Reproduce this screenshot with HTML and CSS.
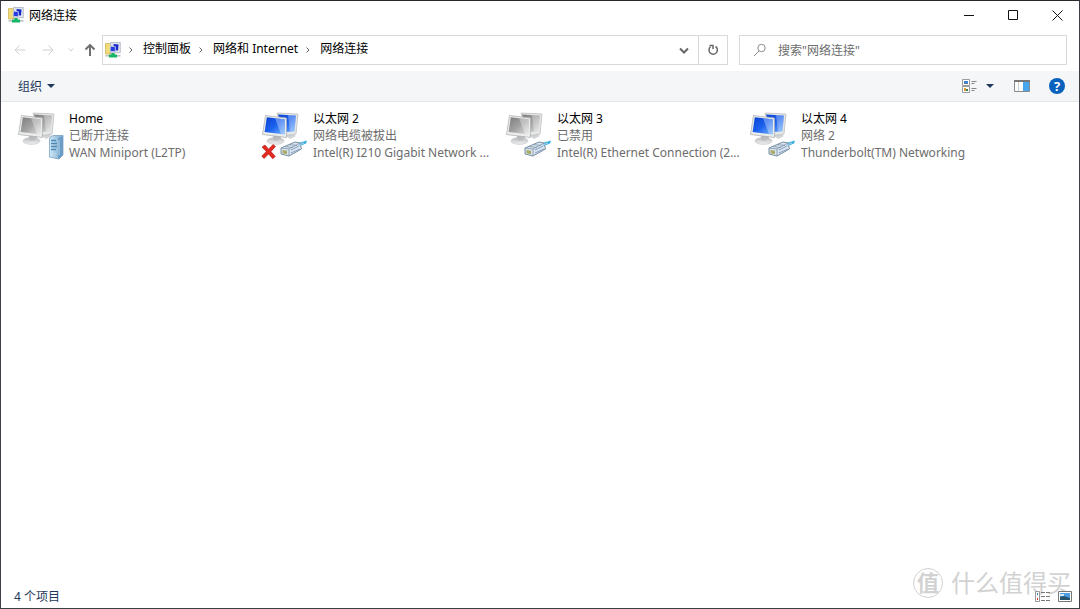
FILE: index.html
```html
<!DOCTYPE html>
<html lang="zh-CN">
<head>
<meta charset="utf-8">
<title>网络连接</title>
<link rel="stylesheet" href="styles.css">
</head>
<body>
<svg class="defs" aria-hidden="true">
  <defs>
    <linearGradient id="blue" x1="0" y1="0" x2="1" y2="1"><stop offset="0" stop-color="#0a3fd0"/><stop offset=".5" stop-color="#1b62ee"/><stop offset="1" stop-color="#7db8fb"/></linearGradient>
    <linearGradient id="gray" x1="0" y1="0" x2="1" y2="1"><stop offset="0" stop-color="#7c7c7c"/><stop offset=".5" stop-color="#a2a2a2"/><stop offset="1" stop-color="#e2e2e2"/></linearGradient>
    <linearGradient id="base" x1="0" y1="0" x2="0" y2="1"><stop offset="0" stop-color="#b9bbbe"/><stop offset="1" stop-color="#f1f1f1"/></linearGradient>
    <linearGradient id="tower" x1="0" y1="0" x2="1" y2="0"><stop offset="0" stop-color="#d4e9f7"/><stop offset="1" stop-color="#6fa3cb"/></linearGradient>
  </defs>
  <symbol id="monitors" viewBox="0 0 48 50">
    <path d="M25 26l7-2 3 2-6 3z" fill="#d2d4d6"/>
    <path d="M16 3L37 4 35 24 23 26z" fill="#e6e7e8" stroke="#b4b6b8" stroke-width=".7"/>
    <path d="M17 4.500L35 5.500 33.500 21.500 23 22z" fill="var(--screen)"/>
    <path d="M27 5l8 .5-1.500 16-4.500.3z" fill="#fff" opacity=".3"/>
    <path d="M12 25l8 1-1 5h-6z" fill="#a9abad"/>
    <ellipse cx="14.500" cy="31" rx="8.500" ry="3.400" fill="url(#base)" stroke="#c4c5c6" stroke-width=".6"/>
    <path d="M12 26l6 1-.5 3.500-5-.2z" fill="#babcbe"/>
    <path d="M4.500 5.500L25.500 8 25.500 27.500 1.500 24.500z" fill="#eceded" stroke="#a8aaac" stroke-width=".7"/>
    <path d="M5.800 7.200L24 9.300 24 24.500 3.600 22z" fill="var(--screen)"/>
    <path d="M14 8.200l10 1.100v15.200l-4-.5z" fill="#fff" opacity=".32"/>
  </symbol>
  <symbol id="plug" viewBox="0 0 48 50">
    <path d="M33 35l6-2.500 7-2-1 3-6 2.500z" fill="#35aedb"/>
    <path d="M20 38l14-6 5 1 1.500 6L28 46l-8-2z" fill="#d9e5ef" stroke="#6c8298" stroke-width=".9"/>
    <path d="M20 38l8 1 11-6M28 39v7M24 36.500l8 1M28 34.500l8 1" fill="none" stroke="#7e93ab" stroke-width=".8"/>
    <path d="M30 40l8-4M30 43l9-4" stroke="#86a0c4" stroke-width="1"/>
    <path d="M21.500 40l4.500.8v3.400l-4.500-1z" fill="#a9aa65"/>
    <path d="M38 35l5-2" stroke="#8cc8e5" stroke-width="1.500"/>
  </symbol>
  <symbol id="server" viewBox="0 0 48 50">
    <path d="M32.500 28L36 25.500h10V45l-4 4-9.500-2z" fill="url(#tower)" stroke="#6a97bb" stroke-width=".7"/>
    <path d="M41 28.500V49l5-4V26z" fill="#6b9cc5"/>
    <path d="M34 30.500h5M34 33.500h6M34 36.500h6M34 39.500h5" stroke="#4d87b5" stroke-width="1.300"/>
    <path d="M34 43l5 1M42 30v15" stroke="#b8d9ef"/>
  </symbol>
  <symbol id="cross" viewBox="0 0 48 50">
    <path d="M1 37l3-2 3.600 4.300L12 34.500l2.500 2-4.500 5 4.300 5-2.600 2.200-4.200-4.700-4.400 4.500L.8 46.200l4.500-4.800z" fill="#e02a22" stroke="#b31512" stroke-width=".6"/>
  </symbol>
  <symbol id="app" viewBox="0 0 16 16">
    <path d="M.5 1.500h4l1 1.500v9h-5z" fill="#f0dc79" stroke="#c4a53c" stroke-width=".6"/>
    <path d="M5.500.5h9.800v10.300H5.500z" fill="#dfe4ec" stroke="#a2abba" stroke-width=".7"/>
    <path d="M8.500 2l5 .6-.5 6-4-.4z" fill="#1628cc"/>
    <path d="M5.500 4l5 .8-.3 5L5 9.200z" fill="#253cde" stroke="#d4d9e8" stroke-width=".8"/>
    <path d="M6 11h4v2H6z" fill="#c8ccd0"/>
    <path d="M.5 13.800h15" stroke="#b5babd" stroke-width="1.500"/>
    <path d="M6.500 11h3v1.500h2.500v3H4v-3h2.500z" fill="#16b568"/>
  </symbol>
</svg>
<div class="window">
  <header class="titlebar">
    <svg class="app-icon"><use href="#app"/></svg>
    <h1 class="title">网络连接</h1>
    <div class="controls">
      <button class="control" aria-label="最小化"><svg viewBox="0 0 11 11"><path d="M0 5.500h10"/></svg></button>
      <button class="control" aria-label="最大化"><svg viewBox="0 0 11 11"><path d="M.5 .5h9v9h-9z"/></svg></button>
      <button class="control" aria-label="关闭"><svg viewBox="0 0 11 11"><path d="M.5.5l10 10M10.500.5l-10 10"/></svg></button>
    </div>
  </header>
  <nav class="navbar">
    <div class="history">
      <button class="nav-button" aria-label="后退" disabled><svg viewBox="0 0 12 12"><path d="M11.500 6H1M5.500 1.500L1 6l4.500 4.500"/></svg></button>
      <button class="nav-button" aria-label="前进" disabled><svg viewBox="0 0 12 12"><path d="M.5 6H11M6.500 1.500L11 6l-4.500 4.500"/></svg></button>
      <button class="nav-button recent" aria-label="最近位置" disabled><svg viewBox="0 0 12 12"><path d="M3.500 4.500L6 7l2.500-2.500"/></svg></button>
      <button class="nav-button up" aria-label="向上"><svg viewBox="0 0 12 12"><path d="M6 12V1M1.500 5.500L6 1l4.500 4.500"/></svg></button>
    </div>
    <div class="address">
      <svg class="app-icon"><use href="#app"/></svg>
      <svg class="chevron" viewBox="0 0 6 8"><path d="M1.500 1.500L4 4 1.500 6.500"/></svg>
      <a class="crumb" href="#">控制面板</a>
      <svg class="chevron" viewBox="0 0 6 8"><path d="M1.500 1.500L4 4 1.500 6.500"/></svg>
      <a class="crumb" href="#">网络和 Internet</a>
      <svg class="chevron" viewBox="0 0 6 8"><path d="M1.500 1.500L4 4 1.500 6.500"/></svg>
      <a class="crumb" href="#">网络连接</a>
      <button class="address-button dropdown" aria-label="以前的位置"><svg viewBox="0 0 12 12"><path d="M2 4.500l4 4 4-4"/></svg></button>
      <button class="address-button refresh" aria-label="刷新"><svg viewBox="0 0 12 12"><path d="M8.500 2.500A4.200 4.200 0 1 1 3.500 2.800M2.500 1.500h3.500v3.500"/></svg></button>
    </div>
    <label class="search">
      <svg viewBox="0 0 14 14"><circle cx="8.500" cy="5" r="3.700"/><path d="M6 8l-5 5"/></svg>
      <input class="search-input" type="text" placeholder='搜索"网络连接"' aria-label="搜索">
    </label>
  </nav>
  <div class="toolbar">
    <button class="organize">组织 <span class="caret"></span></button>
    <div class="tools">
      <button class="tool" aria-label="更改视图">
        <svg class="view-icon" viewBox="0 0 16 14"><path d="M.5.500h7v6h-7zM.5 7.500h7v6h-7z" fill="#fff" stroke="#9a9a9a"/><path d="M2 2h4v2H2z" fill="#3985df"/><path d="M2 4h4v1H2z" fill="#60798d"/><path d="M2 9h2v3H2z" fill="#e09a35"/><path d="M4 10h2v2H4z" fill="#318444"/><path d="M9.500 2.500h5M9.500 4.500h3M9.500 9.500h5M9.500 11.500h3" stroke="#858585"/></svg>
      </button>
      <button class="tool more" aria-label="更多选项"><span class="caret"></span></button>
      <button class="tool pane" aria-label="预览窗格">
        <svg class="pane-icon" viewBox="0 0 16 12"><path d="M.5.500h15v11H.5z" fill="#fff" stroke="#8a8a8a"/><path d="M0 1h16" stroke="#777" stroke-width="2"/><path d="M4.500 2v9" stroke="#ccc"/><path d="M9 2h6v9H9z" fill="#45a5ed"/></svg>
      </button>
      <button class="help" aria-label="帮助">?</button>
    </div>
  </div>
  <main class="content">
    <ul class="connections">
      <li class="connection disabled">
        <svg class="connection-icon"><use href="#monitors"/><use href="#server"/></svg>
        <div class="info"><p class="name">Home</p><p class="status">已断开连接</p><p class="device">WAN Miniport (L2TP)</p></div>
      </li>
      <li class="connection">
        <svg class="connection-icon"><use href="#monitors"/><use href="#plug"/><use href="#cross"/></svg>
        <div class="info"><p class="name">以太网 2</p><p class="status">网络电缆被拔出</p><p class="device">Intel(R) I210 Gigabit Network ...</p></div>
      </li>
      <li class="connection disabled">
        <svg class="connection-icon"><use href="#monitors"/><use href="#plug"/></svg>
        <div class="info"><p class="name">以太网 3</p><p class="status">已禁用</p><p class="device">Intel(R) Ethernet Connection (2...</p></div>
      </li>
      <li class="connection">
        <svg class="connection-icon"><use href="#monitors"/><use href="#plug"/></svg>
        <div class="info"><p class="name">以太网 4</p><p class="status">网络 2</p><p class="device">Thunderbolt(TM) Networking</p></div>
      </li>
    </ul>
  </main>
  <footer class="statusbar">
    <span class="count">4 个项目</span>
    <div class="views">
      <button class="view" aria-label="详细信息"><svg viewBox="0 0 16 12"><path d="M.5.500h4v10h-4z" fill="#fff" stroke="#999"/><path d="M2 2h1v2H2z" fill="#3b78b8"/><path d="M2 7h1v2H2z" fill="#d33"/><path d="M6 1.500h4M11 1.500h4M6 5.500h4M11 5.500h4M6 9.500h4M11 9.500h4" stroke="#777"/></svg></button>
      <button class="view" aria-label="大图标"><svg viewBox="0 0 14 12"><path d="M.5.500h13v10H.5z" fill="#fff" stroke="#777"/><path d="M2 2h10v7H2z" fill="#4d9be0"/><path d="M2 6l4-1 6 2v2H2z" fill="#27546b"/><path d="M2 3h4v2H2z" fill="#cfe7f8"/></svg></button>
    </div>
  </footer>
  <div class="watermark"><span class="seal">值</span><span>什么值得买</span></div>
</div>
</body>
</html>
```
FILE: styles.css
```css
* { box-sizing: border-box; }

body {
  margin: 0;
  font: 12px/17px "Noto Sans", "Noto Sans CJK SC", sans-serif;
  color: #000;
}

h1, p, ul { margin: 0; padding: 0; font-size: inherit; font-weight: 400; }
ul { list-style: none; }
button, input { font: inherit; border: 0; padding: 0; background: none; color: inherit; }
a { color: inherit; text-decoration: none; }
svg { display: block; flex: none; fill: none; }

.defs { position: absolute; width: 0; height: 0; }

.window {
  position: relative;
  display: flex;
  flex-direction: column;
  min-height: 100vh;
  background: #fff;
  border: 1px solid #3b3f46;
  border-top-color: #2b282b;
}

.titlebar { display: flex; align-items: center; height: 28px; padding-left: 7px; }
.app-icon { width: 16px; height: 16px; }
.title { margin-left: 5px; }
.controls { display: flex; margin-left: auto; }
.control { display: grid; place-items: center; width: 44px; height: 28px; }
.control svg { width: 11px; height: 11px; stroke: #111; }

.navbar { display: flex; align-items: center; height: 42px; padding: 0 12px 0 8px; }
.history { display: flex; align-items: center; width: 93px; }
.nav-button { display: grid; place-items: center; width: 28px; height: 28px; padding-right: 6px; }
.nav-button svg { width: 12px; height: 12px; stroke: #707070; stroke-width: 2; }
.nav-button:disabled svg { stroke: #d0d0d0; stroke-width: 1; }
.nav-button.recent { width: 12px; padding: 0; }
.nav-button.up { width: 20px; margin-left: 3px; padding: 0; }

.address {
  display: flex;
  align-items: center;
  flex: 1;
  height: 30px;
  padding-left: 2px;
  border: 1px solid #d9d9d9;
}
.crumb { line-height: 18px; padding-bottom: 2px; }
.chevron { width: 6px; height: 8px; margin: 0 9px 0 7px; stroke: #666; }
.address-button { display: grid; place-items: center; width: 29px; height: 28px; }
.address-button svg { width: 12px; height: 12px; stroke: #666; stroke-width: 2; }
.dropdown { margin-left: auto; }
.refresh { border-left: 1px solid #d9d9d9; }
.refresh svg { stroke-width: 1.5; }

.search {
  display: flex;
  align-items: center;
  flex: 0 0 31%;
  height: 30px;
  margin-left: 11px;
  padding-left: 13px;
  border: 1px solid #d9d9d9;
}
.search svg { width: 14px; height: 14px; stroke: #8b8b8b; }
.search-input { flex: 1; min-width: 0; margin-left: 11px; outline: 0; }
.search-input::placeholder { color: #6d6d6d; opacity: 1; }

.toolbar {
  display: flex;
  align-items: center;
  justify-content: space-between;
  height: 31px;
  padding: 0 14px 0 17px;
  background: #f4f6f8;
  border-bottom: 1px solid #e6e7e8;
}
.organize { display: flex; align-items: center; gap: 5px; color: #1e395b; }
.caret { display: block; border: 4px solid transparent; border-top-color: #1e395b; border-bottom: 0; }
.tools { display: flex; align-items: center; }
.view-icon { width: 16px; height: 14px; }
.more { margin-left: 8px; }
.pane { margin-left: 20px; }
.pane-icon { width: 16px; height: 12px; }
.help {
  width: 16px;
  height: 16px;
  margin-left: 19px;
  border-radius: 50%;
  background: #0a62bd;
  color: #fff;
  font-size: 13px;
  font-weight: 700;
  line-height: 16px;
}

.content { flex: 1; padding: 8px 16px; }
.connections { display: grid; grid-template-columns: repeat(auto-fill, 244px); }
.connection { --screen: url(#blue); display: flex; gap: 4px; }
.connection.disabled { --screen: url(#gray); }
.connection-icon { width: 48px; height: 50px; }
.info { white-space: nowrap; }
.status, .device { color: #6d6d6d; }
.device { line-height: 18px; }

.statusbar {
  display: flex;
  align-items: center;
  justify-content: space-between;
  height: 23px;
  padding: 0 6px 0 13px;
}
.count { color: #1e395b; }
.views { position: relative; z-index: 1; display: flex; gap: 6px; }
.view svg { width: 16px; height: 12px; }

.watermark {
  position: absolute;
  right: 8px;
  bottom: 10px;
  display: flex;
  align-items: center;
  gap: 8px;
  font-size: 24px;
  line-height: 30px;
  color: #d2d2d2;
  pointer-events: none;
}
.seal {
  width: 30px;
  height: 30px;
  border: 1px solid #d2d2d2;
  border-radius: 50%;
  font-size: 22px;
  font-weight: 700;
  line-height: 27px;
  text-align: center;
}
```
